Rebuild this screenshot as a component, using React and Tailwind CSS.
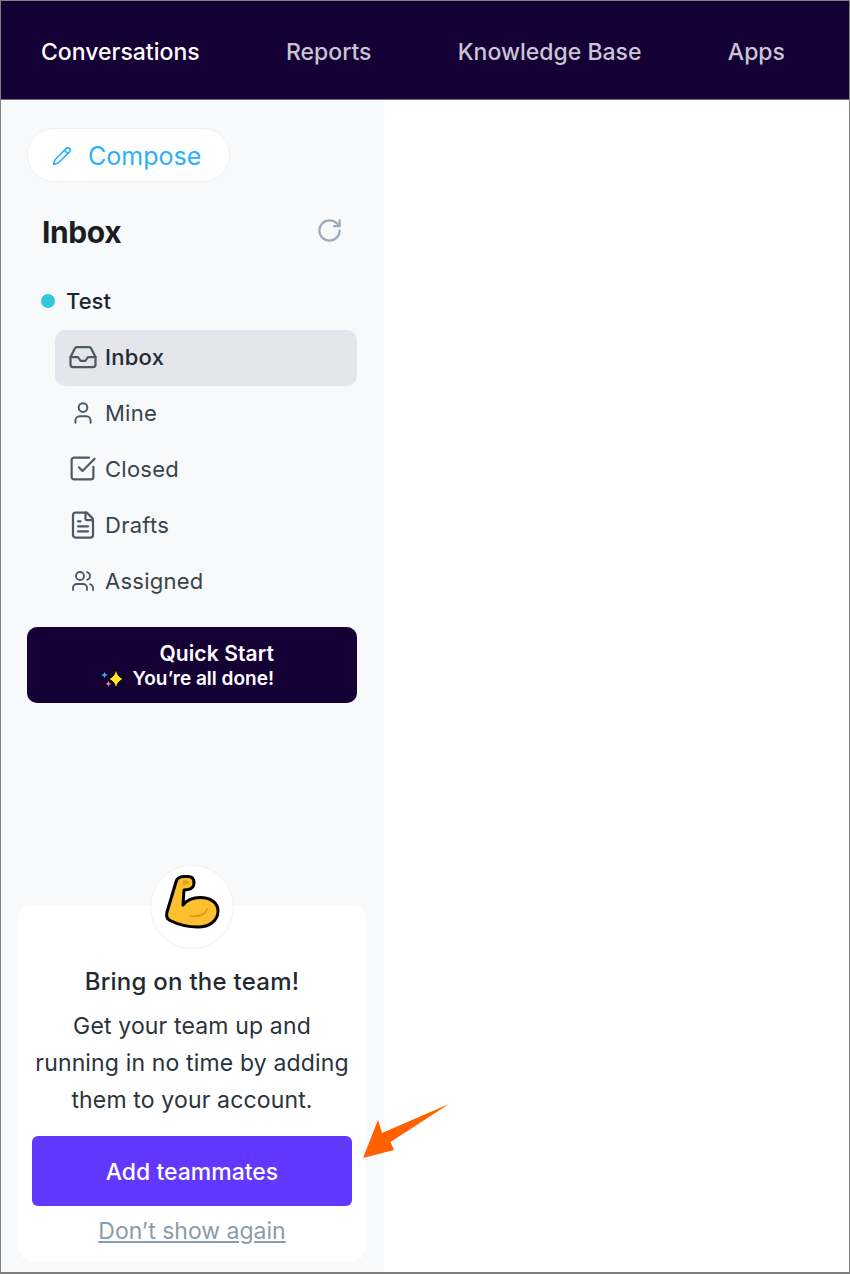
import React from "react";
import { Pencil, RotateCw, Inbox, User, SquareCheckBig, FileText, Users } from "lucide-react";

function NavItem({ label, active }) {
  return (
    <span className={`pt-[3px] text-[23px] leading-7 font-medium ${active ? "text-white" : "text-[#c9c5d3]"}`}>
      {label}
    </span>
  );
}

function FolderRow({ icon: Icon, label, active, size = 24 }) {
  return (
    <div
      className={`h-14 w-[302px] rounded-[10px] flex items-center pb-[3px] ${
        active ? "bg-[#e4e6eb] text-[#232a33] font-medium" : "text-[#39424d]"
      }`}
    >
      <span className="w-[50px] pl-[5px] flex justify-center shrink-0">
        <Icon size={size} strokeWidth={1.8} className="text-[#4d5966]" />
      </span>
      <span className="text-[22px] leading-7 tracking-[0.25px]">{label}</span>
    </div>
  );
}

function Sparkles() {
  return (
    <svg width="25" height="24" viewBox="0 0 25 24" className="shrink-0">
      <path d="M16 .5c.7 6 2 9.500 8 11.500-6 2-7.300 5.500-8 11.500-.7-6-2-9.500-8-11.500C14 10 15.300 6.500 16 .5z" fill="#ffe81a" stroke="#000" strokeWidth="1" />
      <path d="M4.500 4.500c.4 2.300 1 3 3.500 3.500-2.500.5-3.100 1.200-3.500 3.500C4.100 9.200 3.500 8.500 1 8c2.500-.5 3.100-1.200 3.500-3.500z" fill="#2fc4e0" />
      <path d="M8.500 13.500c.4 2.200 1 2.800 3.300 3.300-2.300.5-2.900 1.100-3.300 3.300-.4-2.200-1-2.800-3.300-3.300 2.300-.5 2.900-1.100 3.300-3.300z" fill="#ee7fa8" />
    </svg>
  );
}

function Muscle() {
  return (
    <svg width="60" height="60" viewBox="0 0 60 60" className="-mt-[10px]">
      <path
        d="M5 40 14 10C15 6 18 4.500 22 4.500h4C30 4.500 32 7 32 11c0 4-3 6-6 6.500L22 18 21 33c4-5 10-7.500 17-7.500 11 0 18 5.500 18 13.500 0 10-9 16-20 16-10 0-21-3-28-6.500C5 47 4 44 5 40z"
        fill="#fcc02e"
        stroke="#000"
        strokeWidth="3"
        strokeLinejoin="round"
      />
      <path d="M21 8.500c3-.5 6 .5 6.500 2.500-1 1.500-4 2-6.500 1.500z" fill="#e0a020" />
      <path d="M28 44c8 1 16-1 17-7" fill="none" stroke="#d99a1c" strokeWidth="1.600" strokeLinecap="round" />
    </svg>
  );
}

function Arrow() {
  return (
    <svg width="90" height="58" viewBox="0 0 90 58" className="absolute left-[361px] top-[1102px]">
      <path d="M87 1 28.500 39 32 47 1 55 16 17 20 30z" fill="#ff6000" />
    </svg>
  );
}

export default function App() {
  return (
    <div
      className="relative w-[850px] h-[1274px] flex flex-col bg-white border-[1.5px] border-[#7f7f7f] border-b-2 overflow-hidden"
      style={{ fontFamily: '"Inter", "Liberation Sans", sans-serif' }}
    >
      <header className="h-[99px] shrink-0 bg-[#150036] border-b border-[#6f6a80] flex items-center pl-[40px] pr-[64px] justify-between">
        <NavItem label="Conversations" active />
        <NavItem label="Reports" />
        <NavItem label="Knowledge Base" />
        <NavItem label="Apps" />
      </header>

      <div className="flex flex-1 min-h-0">
        <aside className="w-[383px] bg-[#f7f9fb] flex flex-col px-[17px] pb-[11px]">
          <button className="mt-[28px] ml-[9px] h-[54px] w-[203px] rounded-full bg-white border border-[#f0f1f3] flex items-center pl-[24px] text-[#2bb0ff] text-[25px] font-normal">
            <Pencil size={20} strokeWidth={1.9} className="mr-[16px] mt-[1px]" />
            <span className="pt-[3px]">Compose</span>
          </button>

          <div className="mt-[32px] ml-[24px] w-[301px] flex items-center justify-between">
            <h2 className="text-[30px] leading-9 font-bold tracking-[-0.4px] text-[#1a1d21]">Inbox</h2>
            <RotateCw size={27} strokeWidth={2} className="text-[#9dacb8] -mt-[3px]" />
          </div>

          <div className="mt-[37px] ml-[23px] flex items-center gap-[11px]">
            <span className="w-[14px] h-[14px] rounded-full bg-[#33c6dd]" />
            <span className="text-[22px] leading-7 font-medium text-[#20262d]">Test</span>
          </div>

          <div className="mt-[15px] ml-[37px] flex flex-col">
            <FolderRow icon={Inbox} label="Inbox" active size={30} />
            <FolderRow icon={User} label="Mine" size={26} />
            <FolderRow icon={SquareCheckBig} label="Closed" size={29} />
            <FolderRow icon={FileText} label="Drafts" size={30} />
            <FolderRow icon={Users} label="Assigned" size={24} />
          </div>

          <div className="mt-[17px] ml-[9px] h-[76px] w-[330px] rounded-[10px] bg-[#150036] flex flex-col items-end justify-center pt-[2px] pr-[83px] text-white">
            <span className="text-[21px] leading-[26px] font-semibold tracking-[0.1px]">Quick Start</span>
            <span className="flex items-center text-[19px] leading-[22px] font-semibold">
              <Sparkles />
              <span className="ml-[8px]">You’re all done!</span>
            </span>
          </div>

          <div className="relative mt-auto h-[356px] w-[348px] rounded-[14px] bg-white flex flex-col items-center px-[10px]">
            <div className="absolute left-[132px] -top-[40px] w-[84px] h-[84px] rounded-full bg-white border border-[#f1f2f4] flex items-center justify-center">
              <Muscle />
            </div>
            <h3 className="mt-[60px] text-[24px] leading-[34px] font-medium tracking-[0.25px] text-[#1f2a33]">Bring on the team!</h3>
            <p className="mt-[9px] text-[23px] leading-[37px] text-center text-[#2a333c] tracking-[0.15px] whitespace-nowrap">
              Get your team up and
              <br />
              running in no time by adding
              <br />
              them to your account.
            </p>
            <button className="mt-[17px] h-[70px] w-[320px] pt-[2px] rounded-[6px] bg-[#6237ff] text-white text-[23px] font-medium shrink-0">
              Add teammates
            </button>
            <a className="mt-[9px] text-[23px] leading-8 text-[#8a9caa] underline underline-offset-2">Don’t show again</a>
          </div>
        </aside>
        <main className="flex-1 bg-white" />
      </div>

      <Arrow />
    </div>
  );
}
